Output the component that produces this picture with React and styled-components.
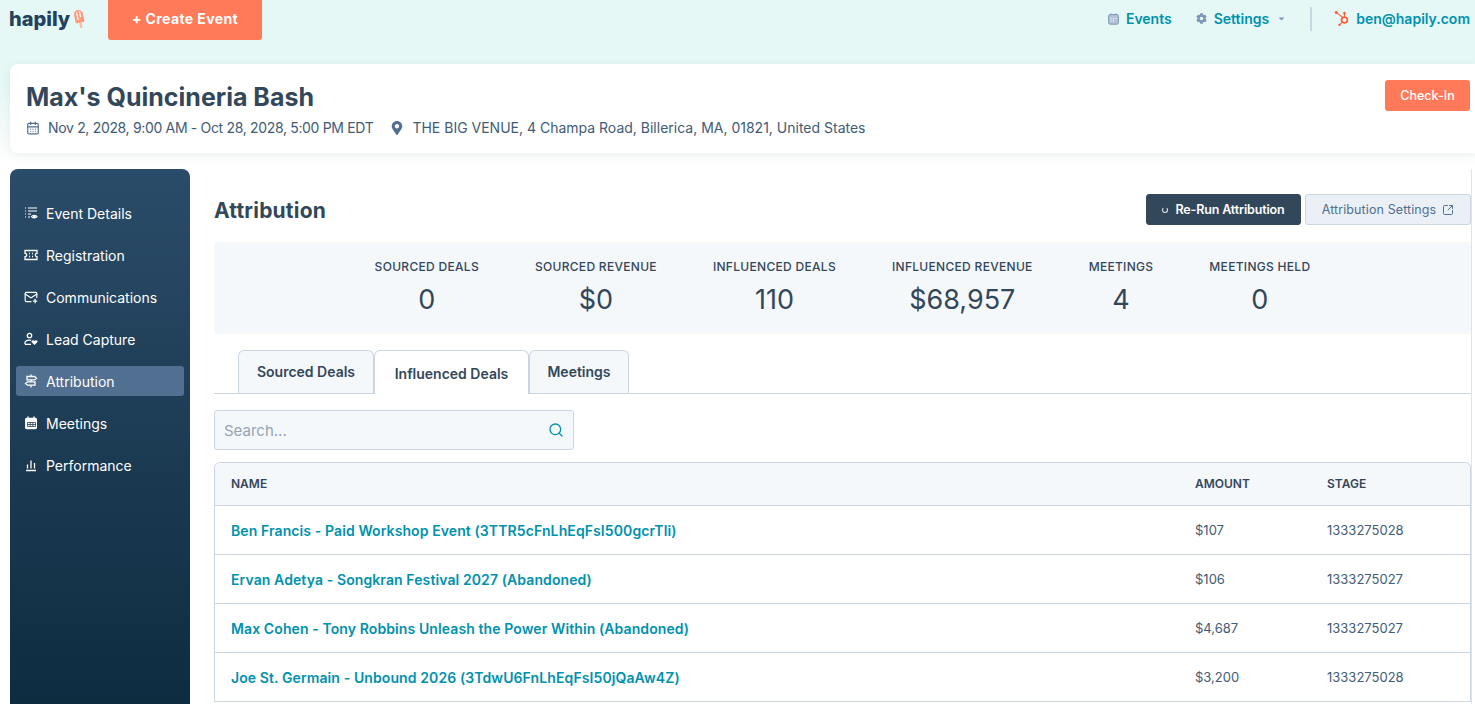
import styled, { createGlobalStyle } from 'styled-components';
import { CalendarDays, MailPlus, SquareArrowOutUpRight, Search } from 'lucide-react';
import { FaMapMarkerAlt, FaCog, FaHubspot, FaCaretDown } from 'react-icons/fa';

const GlobalStyle = createGlobalStyle`
  html, body { margin: 0; padding: 0; height: 100%; overflow: hidden; }
  body { font-family: Inter, "Noto Sans", sans-serif; color: #33475b; background: #fff; }
`;

const Page = styled.div`
  width: 1475px;
  height: 704px;
  overflow: hidden;
  display: flex;
  flex-direction: column;
  background: linear-gradient(#e5f8f6 0, #e5f8f6 80px, #f4fbfa 130px, #ffffff 165px);
`;

const TopBar = styled.header`
  height: 64px;
  flex: none;
  display: flex;
  align-items: flex-start;
  padding: 0 5px 0 9px;
  box-sizing: border-box;
`;

const Brand = styled.div`
  display: flex;
  align-items: center;
  height: 37px;
  width: 99px;
  gap: 2px;
  font-size: 20px;
  font-weight: 800;
  color: #23415c;
`;

const CreateButton = styled.button`
  width: 154px;
  height: 40px;
  padding: 0 0 3px;
  border: 0;
  border-radius: 0 0 3px 3px;
  background: #ff7a59;
  color: #fff;
  font: 700 14px Inter, sans-serif;
  letter-spacing: 0.4px;
`;

const TopNav = styled.nav`
  margin-left: auto;
  height: 37px;
  display: flex;
  align-items: center;
  color: #0091ae;
  font-size: 14px;
  font-weight: 600;
`;

const NavItem = styled.span`
  display: flex;
  align-items: center;
  gap: 7px;
  margin-left: ${(p) => p.$gap || 0}px;
  svg { color: ${(p) => p.$iconColor || '#7c98b6'}; flex: none; }
`;

const Caret = styled(FaCaretDown)`
  margin-left: 1px;
`;

const Divider = styled.span`
  width: 2px;
  height: 24px;
  background: #cbd6e2;
  margin: 0 22px 0 24px;
`;

const EventCard = styled.section`
  flex: none;
  height: 89px;
  margin-left: 10px;
  padding: 16px 5px 0 16px;
  box-sizing: border-box;
  display: flex;
  justify-content: space-between;
  background: #fff;
  border-radius: 8px 0 0 8px;
  box-shadow: 0 2px 10px rgba(45, 62, 80, 0.08);
`;

const EventInfo = styled.div`
  padding-top: 2px;
`;

const EventTitle = styled.h1`
  margin: 0 0 7px;
  font-size: 25px;
  line-height: 30px;
  font-weight: 700;
`;

const EventMeta = styled.div`
  display: flex;
  align-items: center;
  font-size: 14px;
  line-height: 18px;
  color: #425b76;
`;

const MetaItem = styled.span`
  display: flex;
  align-items: center;
  gap: ${(p) => p.$gap}px;
  margin-right: 17px;
  letter-spacing: ${(p) => p.$tracking || 0}px;
  svg { color: #516f90; flex: none; }
`;

const CheckInButton = styled.button`
  width: 85px;
  height: 31px;
  border: 0;
  border-radius: 3px;
  background: #ff7a59;
  color: #fff;
  font: 500 12.5px Inter, sans-serif;
`;

const Body = styled.div`
  flex: 1;
  min-height: 0;
  display: flex;
  padding: 16px 3px 0 10px;
`;

const Sidebar = styled.aside`
  width: 180px;
  flex: none;
  padding: 29px 6px;
  box-sizing: border-box;
  border-radius: 8px 8px 0 0;
  background: linear-gradient(#2b4c69, #0e2c40);
  display: flex;
  flex-direction: column;
  gap: 12px;
`;

const SideItem = styled.a`
  height: 30px;
  flex: none;
  padding-left: 8px;
  display: flex;
  align-items: center;
  gap: 8px;
  border-radius: 3px;
  font-size: 14px;
  font-weight: 400;
  color: #fff;
  background: ${(p) => (p.$active ? '#516f90' : 'transparent')};
  svg { flex: none; }
`;

const Main = styled.main`
  flex: 1;
  min-width: 0;
  padding: 25px 0 0 24px;
  border-right: 1px solid #dfe3eb;
  background: #fff;
`;

const TitleRow = styled.div`
  height: 31px;
  display: flex;
  align-items: center;
  gap: 4px;
`;

const SectionTitle = styled.h2`
  margin: 0 auto 0 0;
  padding-top: 2px;
  font-size: 21px;
  letter-spacing: 0.2px;
  font-weight: 700;
`;

const ActionButton = styled.button`
  height: 31px;
  width: ${(p) => p.$width}px;
  display: flex;
  align-items: center;
  justify-content: center;
  gap: ${(p) => (p.$dark ? 7 : 6)}px;
  border-radius: 3px;
  font: ${(p) => (p.$dark ? 600 : 400)} 12.5px Inter, sans-serif;
  letter-spacing: ${(p) => (p.$dark ? -0.15 : 0.1)}px;
  color: ${(p) => (p.$dark ? '#fff' : '#516f90')};
  background: ${(p) => (p.$dark ? '#33475b' : '#eaf0f6')};
  border: 1px solid ${(p) => (p.$dark ? '#33475b' : '#cbd6e2')};
`;

const Spinner = styled.span`
  width: 4px;
  height: 4px;
  border: 1px solid #dfe3eb;
  border-top-color: transparent;
  border-radius: 50%;
`;

const Stats = styled.div`
  margin-top: 17px;
  height: 92px;
  display: flex;
  justify-content: center;
  gap: 56px;
  border-radius: 3px;
  background: #f5f8fa;
`;

const Stat = styled.div`
  display: flex;
  flex-direction: column;
  align-items: center;
  padding-top: 17px;
`;

const StatLabel = styled.span`
  font-size: 12px;
  line-height: 16px;
  font-weight: 500;
  letter-spacing: 0.3px;
  text-transform: uppercase;
`;

const StatValue = styled.span`
  font-size: 27px;
  line-height: 34px;
  margin-top: 8px;
  font-weight: 400;
`;

const Tabs = styled.div`
  margin-top: 16px;
  height: 43px;
  padding-left: 24px;
  display: flex;
  border-bottom: 1px solid #cbd6e2;
`;

const Tab = styled.div`
  width: ${(p) => p.$width}px;
  box-sizing: border-box;
  height: ${(p) => (p.$active ? 44 : 43)}px;
  display: flex;
  align-items: center;
  justify-content: center;
  padding: ${(p) => (p.$active ? '2px 0 0' : '0 0 2px')};
  border: 1px solid #cbd6e2;
  border-bottom: 0;
  border-radius: 6px 6px 0 0;
  background: ${(p) => (p.$active ? '#fff' : '#f5f8fa')};
  font-size: 14px;
  font-weight: 600;
`;

const SearchBox = styled.div`
  margin-top: 16px;
  width: 360px;
  height: 40px;
  box-sizing: border-box;
  padding: 0 9px 0 9px;
  display: flex;
  align-items: center;
  justify-content: space-between;
  border: 1px solid #cbd6e2;
  border-radius: 3px;
  background: #f5f8fa;
  color: #94a5b6;
  font-size: 15px;
  svg { color: #0091ae; }
`;

const Table = styled.table`
  margin-top: 12px;
  width: 100%;
  border-collapse: separate;
  border-spacing: 0;
  border: 1px solid #cbd6e2;
  border-bottom: 0;
  border-radius: 6px 6px 0 0;
  table-layout: fixed;
  font-size: 13px;
`;

const HeadCell = styled.th`
  height: 43px;
  padding: 0 0 2px ${(p) => p.$pad || 0}px;
  width: ${(p) => p.$width || 'auto'};
  box-sizing: border-box;
  text-align: left;
  font-size: 12px;
  font-weight: 600;
  background: #f5f8fa;
  border-bottom: 1px solid #cbd6e2;
  &:first-child { border-top-left-radius: 6px; }
  &:last-child { border-top-right-radius: 6px; }
`;

const Cell = styled.td`
  height: 48px;
  padding: 0 0 0 ${(p) => p.$pad || 0}px;
  border-bottom: 1px solid #cbd6e2;
  color: #425b76;
`;

const DealLink = styled.a`
  color: #0091ae;
  font-size: 14px;
  font-weight: 600;
  letter-spacing: 0.1px;
`;

const Popsicle = () => (
  <svg width="15" height="20" viewBox="0 0 15 20" aria-hidden="true">
    <g transform="rotate(-12 7 10)">
      <path d="M3 12.5V5.5C3 2.8 5 1 7.5 1S12 2.8 12 5.5v7c0 .8-.7 1.3-1.5 1.3h-6C3.7 13.800 3 13.300 3 12.500z" fill="#ff9a7e" />
      <path d="M6 3.500v7M9 3v5" stroke="#fff" strokeWidth="1.300" strokeLinecap="round" fill="none" />
      <rect x="6.300" y="13.800" width="2.400" height="5.500" rx="1" fill="#ffb8a3" />
    </g>
  </svg>
);

const EventsIcon = () => (
  <svg width="11" height="12" viewBox="0 0 11 12" aria-hidden="true">
    <path d="M3 .5v2M8 .5v2" stroke="currentColor" strokeWidth="1.200" />
    <rect x=".6" y="1.600" width="9.800" height="9.600" rx="1.500" fill="#b4c3d2" stroke="currentColor" />
    <path d="M2.500 5.500h1M5 5.500h1M7.500 5.500h1M2.500 8h1M5 8h1" stroke="#fff" />
  </svg>
);

const DetailsIcon = () => (
  <svg width="14" height="14" viewBox="0 0 14 14" fill="none" stroke="currentColor" strokeWidth="1.200" aria-hidden="true">
    <path d="M1 2h1M4 2h9M1 5h1M4 5h9M1 8h1M4 8h3M1 11h1M4 11h2" />
    <path d="M7.500 10.500c1-1.700 4.500-1.700 5.500 0-1 1.700-4.500 1.700-5.500 0z" />
    <circle cx="10.300" cy="10.500" r=".8" fill="currentColor" />
  </svg>
);

const TicketIcon = () => (
  <svg width="14" height="14" viewBox="0 0 14 14" fill="none" stroke="currentColor" strokeWidth="1.300" aria-hidden="true">
    <path d="M1 2.500h12v2.800a1.700 1.700 0 0 0 0 3.400v2.800H1V8.700a1.700 1.700 0 0 0 0-3.400z" />
    <path d="M5 5.500h1M8 5.500h1M5 8.500h1M8 8.500h1" />
  </svg>
);

const LeadIcon = () => (
  <svg width="14" height="14" viewBox="0 0 14 14" fill="none" stroke="currentColor" strokeWidth="1.300" aria-hidden="true">
    <circle cx="5.500" cy="3.500" r="2.200" />
    <path d="M1 12.300v-1.200c0-2 2-3 4.500-3 .6 0 1.100.1 1.600.2M1 12.300h6" />
    <path d="M10.500 13l-2.800-2.800c-1-1.400 1.600-3 2.800-1.300 1.200-1.700 3.800-.1 2.800 1.300z" fill="currentColor" stroke="none" />
  </svg>
);

const SignIcon = () => (
  <svg width="14" height="14" viewBox="0 0 14 14" fill="none" stroke="currentColor" strokeWidth="1.300" aria-hidden="true">
    <path d="M7 .5v13" />
    <path d="M3 2.500h7.500l2 1.700-2 1.700H3zM11 7.800H3.500l-2 1.700 2 1.700H11z" fill="#516f90" />
  </svg>
);

const MeetingsIcon = () => (
  <svg width="14" height="14" viewBox="0 0 14 14" aria-hidden="true">
    <path d="M4 .5v2.500M10 .5v2.500" stroke="currentColor" strokeWidth="1.400" />
    <path d="M1 3.500C1 2.500 1.700 1.800 2.700 1.800h8.600c1 0 1.700.7 1.700 1.700v8c0 1-.7 1.700-1.700 1.700H2.700c-1 0-1.700-.7-1.700-1.700z" fill="currentColor" />
    <path d="M3.500 6.500h8v4h-8zM3.500 8.500h8M6.200 6.500v4M8.800 6.500v4" fill="none" stroke="#24425c" strokeWidth=".8" />
  </svg>
);

const BarsIcon = () => (
  <svg width="14" height="14" viewBox="0 0 14 14" stroke="currentColor" strokeWidth="1.300" fill="none" aria-hidden="true">
    <path d="M2 12.500h10M3.500 10.500V6.500M7 10.500V2.500M10.500 10.500V5" />
  </svg>
);

const navItems = [
  { label: 'Event Details', icon: <DetailsIcon /> },
  { label: 'Registration', icon: <TicketIcon /> },
  { label: 'Communications', icon: <MailPlus size={14} /> },
  { label: 'Lead Capture', icon: <LeadIcon /> },
  { label: 'Attribution', icon: <SignIcon />, active: true },
  { label: 'Meetings', icon: <MeetingsIcon /> },
  { label: 'Performance', icon: <BarsIcon /> },
];

const stats = [
  ['Sourced Deals', '0'],
  ['Sourced Revenue', '$0'],
  ['Influenced Deals', '110'],
  ['Influenced Revenue', '$68,957'],
  ['Meetings', '4'],
  ['Meetings Held', '0'],
];

const deals = [
  ['Ben Francis - Paid Workshop Event (3TTR5cFnLhEqFsI500gcrTli)', '$107', '1333275028'],
  ['Ervan Adetya - Songkran Festival 2027 (Abandoned)', '$106', '1333275027'],
  ['Max Cohen - Tony Robbins Unleash the Power Within (Abandoned)', '$4,687', '1333275027'],
  ['Joe St. Germain - Unbound 2026 (3TdwU6FnLhEqFsI50jQaAw4Z)', '$3,200', '1333275028'],
];

export default function App() {
  return (
    <Page>
      <GlobalStyle />
      <TopBar>
        <Brand>hapily<Popsicle /></Brand>
        <CreateButton>+ Create Event</CreateButton>
        <TopNav>
          <NavItem><EventsIcon />Events</NavItem>
          <NavItem $gap={24}><FaCog size={11} />Settings<Caret size={9} /></NavItem>
          <Divider />
          <NavItem $iconColor="#ff5c35"><FaHubspot size={15} />ben@hapily.com</NavItem>
        </TopNav>
      </TopBar>
      <EventCard>
        <EventInfo>
          <EventTitle>Max's Quincineria Bash</EventTitle>
          <EventMeta>
            <MetaItem $gap={8} $tracking={-0.33}><CalendarDays size={14} />Nov 2, 2028, 9:00 AM - Oct 28, 2028, 5:00 PM EDT</MetaItem>
            <MetaItem $gap={8}><FaMapMarkerAlt size={14} />THE BIG VENUE, 4 Champa Road, Billerica, MA, 01821, United States</MetaItem>
          </EventMeta>
        </EventInfo>
        <CheckInButton>Check-In</CheckInButton>
      </EventCard>
      <Body>
        <Sidebar>
          {navItems.map((item) => (
            <SideItem key={item.label} $active={item.active}>{item.icon}{item.label}</SideItem>
          ))}
        </Sidebar>
        <Main>
          <TitleRow>
            <SectionTitle>Attribution</SectionTitle>
            <ActionButton $dark $width={155}><Spinner />Re-Run Attribution</ActionButton>
            <ActionButton $width={166}>Attribution Settings<SquareArrowOutUpRight size={12} /></ActionButton>
          </TitleRow>
          <Stats>
            {stats.map(([label, value]) => (
              <Stat key={label}>
                <StatLabel>{label}</StatLabel>
                <StatValue>{value}</StatValue>
              </Stat>
            ))}
          </Stats>
          <Tabs>
            <Tab $width={136}>Sourced Deals</Tab>
            <Tab $width={155} $active>Influenced Deals</Tab>
            <Tab $width={100}>Meetings</Tab>
          </Tabs>
          <SearchBox>Search...<Search size={16} /></SearchBox>
          <Table>
            <thead>
              <tr>
                <HeadCell $pad={16}>NAME</HeadCell>
                <HeadCell $width="132px">AMOUNT</HeadCell>
                <HeadCell $width="143px">STAGE</HeadCell>
              </tr>
            </thead>
            <tbody>
              {deals.map(([name, amount, stage]) => (
                <tr key={name}>
                  <Cell $pad={16}><DealLink>{name}</DealLink></Cell>
                  <Cell>{amount}</Cell>
                  <Cell>{stage}</Cell>
                </tr>
              ))}
            </tbody>
          </Table>
        </Main>
      </Body>
    </Page>
  );
}
